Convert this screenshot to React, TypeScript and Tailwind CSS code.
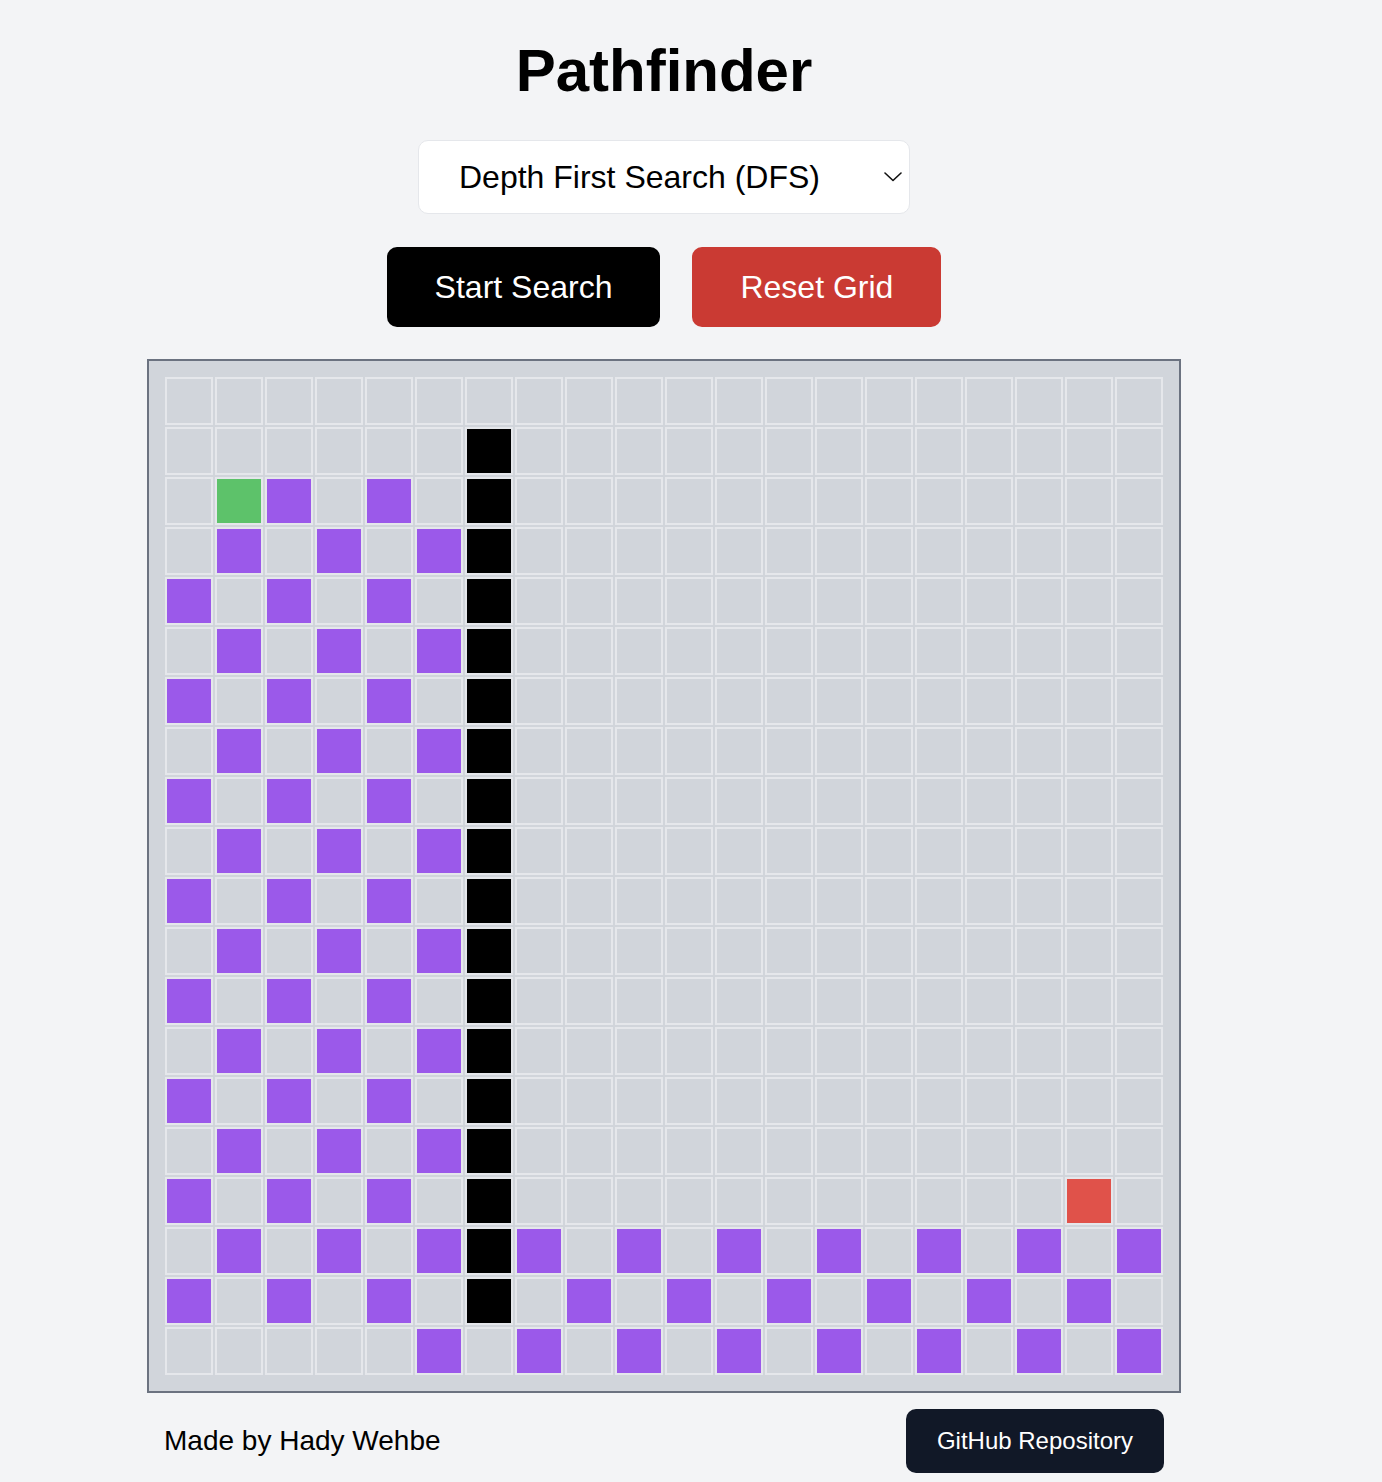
import React from "react";

const ROWS = 20;
const COLS = 20;

type Kind = "empty" | "wall" | "visited" | "start" | "end";

function buildGrid(): Kind[][] {
  const g: Kind[][] = [];
  for (let r = 0; r < ROWS; r++) {
    const row: Kind[] = [];
    for (let c = 0; c < COLS; c++) row.push("empty");
    g.push(row);
  }
  for (let r = 1; r <= 18; r++) g[r][6] = "wall";
  for (let r = 2; r <= 18; r++) {
    for (let c = 0; c <= 5; c++) {
      if ((r + c) % 2 === 0) g[r][c] = "visited";
    }
  }
  g[2][0] = "empty";
  g[2][1] = "start";
  for (let r = 17; r <= 19; r++) {
    for (let c = 7; c < COLS; c++) {
      if ((r + c) % 2 === 0) g[r][c] = "visited";
    }
  }
  g[19][5] = "visited";
  g[16][18] = "end";
  return g;
}

const grid = buildGrid();

function Cell({ kind }: { kind: Kind }) {
  let bg = "bg-[#d1d5db]";
  if (kind === "wall") bg = "bg-black";
  else if (kind === "visited") bg = "bg-[#9b59ea]";
  else if (kind === "start") bg = "bg-[#5dc26a]";
  else if (kind === "end") bg = "bg-[#e0524a]";
  return <div className={`w-12 h-12 border-2 border-[#e5e7eb] ${bg}`} />;
}

export default function App() {
  return (
    <div className="min-h-screen bg-[#f3f4f6] font-['Liberation_Sans',Arial,sans-serif] text-black">
      <div className="w-[1328px] flex flex-col items-center pb-[9px]">
        <h1 className="mt-[41px] text-6xl font-bold leading-none">Pathfinder</h1>

        <div className="relative mt-[39px] w-[492px]">
          <select
            defaultValue="dfs"
            className="appearance-none w-full h-[74px] rounded-[10px] border border-[#e5e7eb] bg-white pl-[40px] pr-10 text-[32px] leading-[48px] text-black outline-none font-['Liberation_Sans',Arial,sans-serif]"
          >
            <option value="bfs">Breadth First Search (BFS)</option>
            <option value="dfs">Depth First Search (DFS)</option>
            <option value="dijkstra">Dijkstra's Algorithm</option>
            <option value="astar">A* Search</option>
          </select>
          <svg
            className="pointer-events-none absolute right-[8px] top-[32px]"
            width="18"
            height="10"
            viewBox="0 0 18 10"
            fill="none"
          >
            <polyline points="1,1 9,8.5 17,1" stroke="#111" strokeWidth="1.6" strokeLinecap="round" strokeLinejoin="round" />
          </svg>
        </div>

        <div className="mt-[33px] flex gap-8">
          <button className="bg-black text-white text-[32px] leading-[48px] px-12 py-4 rounded-[10px]">
            Start Search
          </button>
          <button className="bg-[#ca3a33] text-white text-[32px] leading-[48px] px-12 py-4 rounded-[10px]">
            Reset Grid
          </button>
        </div>

        <div className="mt-8 border-2 border-[#6b7280] bg-[#d1d5db] p-4">
          <div className="grid grid-cols-[repeat(20,48px)] gap-0.5">
            {grid.map((row, r) =>
              row.map((kind, c) => <Cell key={`${r}-${c}`} kind={kind} />)
            )}
          </div>
        </div>

        <div className="mt-4 w-[1000px] flex items-center justify-between">
          <span className="text-[28px] leading-8">Made by Hady Wehbe</span>
          <button className="bg-[#111827] text-white text-2xl leading-8 px-[31px] py-4 rounded-[10px]">
            GitHub Repository
          </button>
        </div>
      </div>
    </div>
  );
}
